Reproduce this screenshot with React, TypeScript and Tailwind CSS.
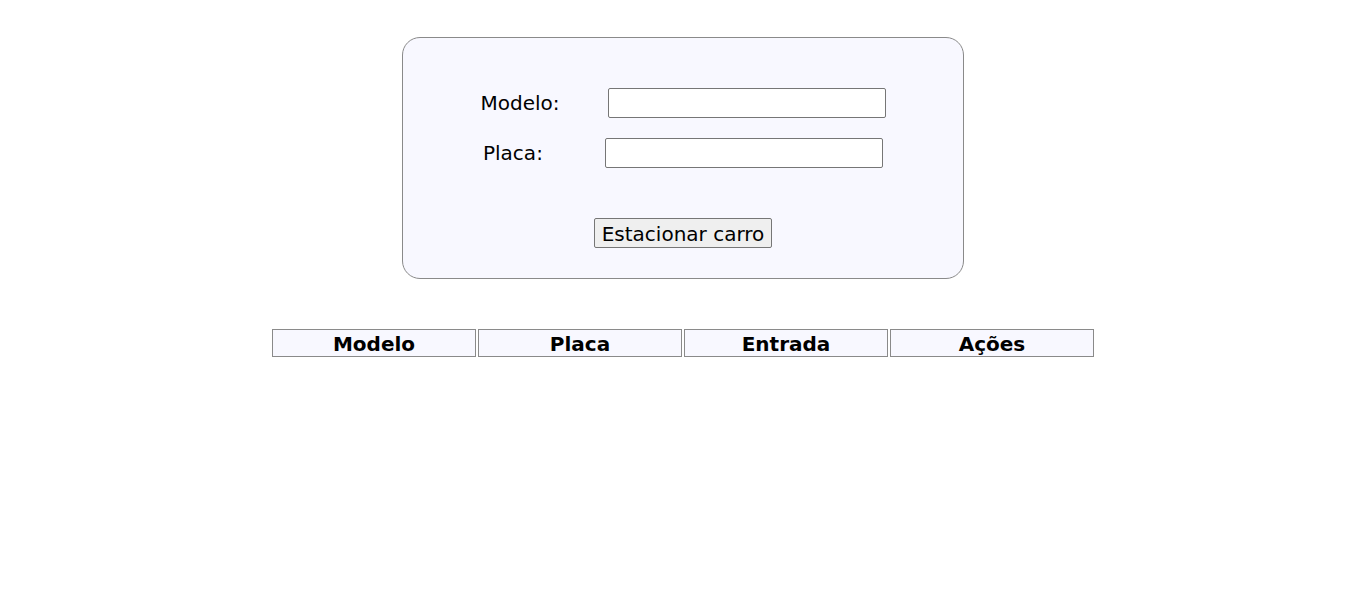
import React from "react";

export default function App() {
  return (
    <div className="min-h-[607px] w-full bg-white text-black" style={{ fontFamily: '"DejaVu Sans", Verdana, sans-serif' }}>
      <div className="flex flex-col items-center pt-[37px]">
        <div className="w-[562px] h-[242px] rounded-[18px] border border-[#8a8a8a] bg-[#f8f8ff] flex flex-col items-center pt-[50px]">
          <div className="flex items-center h-[30px] text-[20px]">
            <span className="w-[78px] whitespace-nowrap">Modelo:</span>
            <input className="ml-[49px] w-[278px] h-[30px] bg-white border border-[#767676] rounded-[2px]" />
          </div>
          <div className="flex items-center h-[30px] mt-[20px] text-[20px]">
            <span className="w-[60px] whitespace-nowrap">Placa:</span>
            <input className="ml-[62px] w-[278px] h-[30px] bg-white border border-[#767676] rounded-[2px]" />
          </div>
          <button className="mt-[50px] w-[178px] h-[30px] pt-[2px] bg-[#efefef] border border-[#767676] rounded-[2px] text-[20px] leading-none">
            Estacionar carro
          </button>
        </div>
        <table className="mt-[48px] w-[826px] table-fixed border-separate border-spacing-[2px]">
          <thead>
            <tr>
              {["Modelo", "Placa", "Entrada", "Ações"].map((h) => (
                <th key={h} className="h-[28px] p-0 pt-[2px] border border-[#8a8a8a] bg-[#f8f8ff] text-[20px] font-bold leading-none">
                  {h}
                </th>
              ))}
            </tr>
          </thead>
        </table>
      </div>
    </div>
  );
}
